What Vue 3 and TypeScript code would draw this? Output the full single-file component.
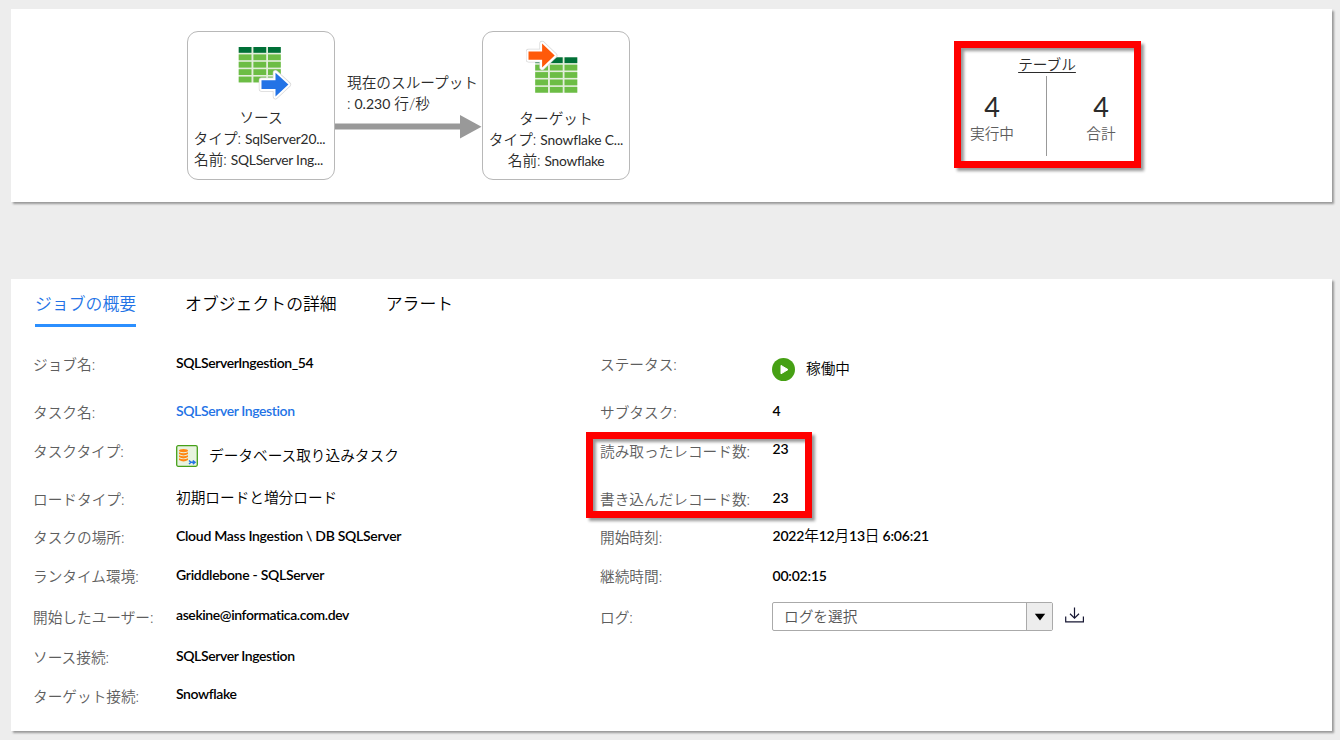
<script setup lang="ts">
interface Field {
  label: string
  value: string
  shift?: string
  kind?: string
  fit?: string
}

const tabs: string[] = ['ジョブの概要', 'オブジェクトの詳細', 'アラート']

const jobFields: Field[] = [
  { label: 'ジョブ名:', value: 'SQLServerIngestion_54', shift: 'up1', fit: 'tight' },
  { label: 'タスク名:', value: 'SQLServer Ingestion', shift: 'up1', kind: 'link', fit: 'tight' },
  { label: 'タスクタイプ:', value: 'データベース取り込みタスク', shift: 'down4', kind: 'task' },
  { label: 'ロードタイプ:', value: '初期ロードと増分ロード', shift: 'up2', kind: 'jp' },
  { label: 'タスクの場所:', value: 'Cloud Mass Ingestion \\ DB SQLServer', shift: 'up1', fit: 'snug' },
  { label: 'ランタイム環境:', value: 'Griddlebone - SQLServer', shift: 'up1', fit: 'snug' },
  { label: '開始したユーザー:', value: 'asekine@informatica.com.dev', shift: 'up2', fit: 'tight' },
  { label: 'ソース接続:', value: 'SQLServer Ingestion', shift: 'up1', fit: 'tight' },
  { label: 'ターゲット接続:', value: 'Snowflake', shift: 'up2', fit: 'tight' },
]

const runFields: Field[] = [
  { label: 'ステータス:', value: '稼働中', shift: 'down4', kind: 'status' },
  { label: 'サブタスク:', value: '4', shift: 'up1', fit: 'digits' },
  { label: '読み取ったレコード数:', value: '23', shift: 'up2', fit: 'digits' },
  { label: '書き込んだレコード数:', value: '23', shift: 'up1', fit: 'digits' },
  { label: '開始時刻:', value: '2022年12月13日 6:06:21', shift: 'up1', kind: 'date', fit: 'digits' },
  { label: '継続時間:', value: '00:02:15', fit: 'digits' },
  { label: 'ログ:', value: 'ログを選択', kind: 'select' },
]

const dateParts = (text: string): string[] => text.split(/([年月日])/)

const columns = [0, 14.7, 29.3]
const rows = [0, 7.4, 14.8, 22.2, 29.6]
</script>

<template>
  <main class="page">
    <section class="card flow">
      <div class="node source">
        <svg class="node-icon" width="60" height="60" viewBox="235 41 60 60">
          <g transform="translate(238.7 47)">
            <rect width="42" height="35.5" fill="#e3eedb" />
            <template v-for="y in rows" :key="y">
              <rect v-for="x in columns" :key="x" :x="x" :y="y" width="12.8" height="5.8" :fill="y ? '#6cbd45' : '#007037'" />
            </template>
          </g>
          <path d="M261.5 80.3h14v-7.6l12.9 11.9-12.9 12v-7.5h-14z" fill="#d8d8d8" stroke="#d8d8d8" stroke-width="5.4" stroke-linejoin="round" />
          <path d="M261.5 80.3h14v-7.6l12.9 11.9-12.9 12v-7.5h-14z" fill="#2373e6" stroke="#fff" stroke-width="4" stroke-linejoin="round" paint-order="stroke" />
        </svg>
        <div class="node-title">ソース</div>
        <div class="node-line">タイプ: <span class="src-type">SqlServer20...</span></div>
        <div class="node-line name">名前: <span class="src-name">SQLServer Ing...</span></div>
      </div>
      <div class="link-area">
        <div class="throughput">現在のスループット<br />: <span class="rate">0.230</span> 行/秒</div>
        <svg class="arrow" width="147" height="24" viewBox="0 0 147 24">
          <path d="M0 8.5h125V0l21.5 11.8L125 23.5v-9H0z" fill="#999" />
        </svg>
      </div>
      <div class="node target">
        <svg class="node-icon" width="60" height="60" viewBox="525.5 39.5 60 60">
          <g transform="translate(534.7 56.8)">
            <rect width="42" height="35.5" fill="#e3eedb" />
            <template v-for="y in rows" :key="y">
              <rect v-for="x in columns" :key="x" :x="x" :y="y" width="12.8" height="5.8" :fill="y ? '#6cbd45' : '#007037'" />
            </template>
          </g>
          <path d="M528 51h13.6v-8l12.6 12-12.6 12v-7.8H528z" fill="#d8d8d8" stroke="#d8d8d8" stroke-width="5.4" stroke-linejoin="round" />
          <path d="M528 51h13.6v-8l12.6 12-12.6 12v-7.8H528z" fill="#ff5a0a" stroke="#fff" stroke-width="4" stroke-linejoin="round" paint-order="stroke" />
        </svg>
        <div class="node-title">ターゲット</div>
        <div class="node-line">タイプ: <span class="dst-type">Snowflake C...</span></div>
        <div class="node-line name">名前: <span class="dst-name">Snowflake</span></div>
      </div>
      <div class="tables">
        <div class="tables-title">テーブル</div>
        <div class="counts">
          <div class="count"><b>4</b><span>実行中</span></div>
          <i class="rule"></i>
          <div class="count"><b>4</b><span>合計</span></div>
        </div>
        <div class="marker"></div>
      </div>
    </section>

    <section class="card details">
      <nav class="tabs">
        <a v-for="(tab, i) in tabs" :key="tab" class="tab" :class="{ active: i === 0 }">{{ tab }}</a>
      </nav>
      <div class="columns">
        <dl class="fields job">
          <template v-for="f in jobFields" :key="f.label">
            <dt>{{ f.label }}</dt>
            <dd :class="[f.shift, f.fit, f.kind]">
              <svg v-if="f.kind === 'task'" class="task-icon" width="22" height="22" viewBox="0 0 22 22">
                <rect x=".7" y=".7" width="20.6" height="20.6" rx="1.5" fill="#e8f3df" stroke="#46a01a" stroke-width="1.3" />
                <g fill="#ff8712">
                  <ellipse cx="7.5" cy="5.6" rx="4.5" ry="1.7" />
                  <path d="M3 7.3q4.5 1.8 9 0v1.8q-4.5 2.6-9 0zM3 10.3q4.5 1.8 9 0v1.8q-4.5 2.6-9 0zM3 13.3q4.5 1.8 9 0v1.8q-4.5 2.8-9 0z" />
                </g>
                <path d="M13 15.5l2 1.8-2 1.8M14 17.3h5M16.8 15.5l2.3 1.8-2.3 1.8" fill="none" stroke="#2373e6" stroke-width="1.4" />
              </svg>
              <span>{{ f.value }}</span>
            </dd>
          </template>
        </dl>
        <dl class="fields run">
          <template v-for="f in runFields" :key="f.label">
            <dt>{{ f.label }}</dt>
            <dd :class="[f.shift, f.fit, f.kind]">
              <template v-if="f.kind === 'select'">
                <div class="combo">
                  <span class="combo-text">{{ f.value }}</span>
                  <span class="combo-button">
                    <svg width="12" height="8" viewBox="0 0 12 8"><path d="M.8.8h10.4L6 7.4z" /></svg>
                  </span>
                </div>
                <svg class="download" width="20" height="17" viewBox="0 0 20 17" fill="none" stroke="#171733" stroke-width="1.2">
                  <path d="M9.5.5v10.2M5 6.7l4.5 4.4L14 6.7M.7 9.5v5.3h17.7V9.5" />
                </svg>
              </template>
              <span v-else-if="f.kind === 'date'" class="date-text"><span v-for="(part, i) in dateParts(f.value)" :key="i" :class="{ unit: i % 2 === 1 }">{{ part }}</span></span>
              <template v-else>
                <svg v-if="f.kind === 'status'" class="play" width="24" height="24" viewBox="0 0 24 24">
                  <circle cx="11.5" cy="11.5" r="11.5" fill="#46a014" />
                  <path d="M9 7.4v8.4l7-4.2z" fill="#fff" stroke="#fff" stroke-linejoin="round" />
                </svg>
                <span>{{ f.value }}</span>
              </template>
            </dd>
          </template>
        </dl>
      </div>
      <div class="marker records"></div>
    </section>
  </main>
</template>

<style>
body {
  margin: 0;
  background: #ededed;
}
</style>

<style scoped>
* {
  box-sizing: border-box;
}
.page {
  height: 740px;
  padding: 9px 8px 0 11px;
  background: #ededed;
  overflow: hidden;
  font-family: Lato, "Noto Sans CJK JP", sans-serif;
  font-size: 14.67px;
  font-weight: 350;
  color: #2b2b2b;
}
.card {
  position: relative;
  width: 1321px;
  background: #fff;
  box-shadow: 2px 2px 2px #999;
}
.flow {
  display: flex;
  align-items: flex-start;
  height: 193px;
  padding: 22px 0 0 176px;
}
.node {
  display: flex;
  flex-direction: column;
  align-items: center;
  width: 148px;
  height: 149px;
  padding-top: 9px;
  border: 1px solid #b8b8b8;
  border-radius: 11px;
  white-space: nowrap;
}
.node-icon {
  flex: none;
  margin-left: 7px;
}
.target .node-icon {
  margin-left: 0;
  margin-top: -1px;
}
.node-title {
  margin-top: 7px;
  line-height: 20px;
}
.target .node-title {
  margin-top: 9px;
}
.node-line {
  line-height: 22px;
}
.source .node-line {
  margin-right: 3px;
}
.source .node-line.name {
  margin-right: 5px;
}
.node-line.name {
  margin-top: -1px;
}
.node-line span {
  font-size: 13.8px;
  font-weight: 400;
  letter-spacing: -0.2px;
}
.node-line .src-name {
  letter-spacing: -0.25px;
}
.node-line .dst-type {
  letter-spacing: -0.15px;
}
.node-line .dst-name {
  letter-spacing: -0.3px;
}
.link-area {
  width: 147px;
  padding-top: 41px;
}
.throughput {
  padding-left: 12px;
  line-height: 21px;
  white-space: nowrap;
}
.rate {
  font-size: 14px;
  font-weight: 400;
}
.arrow {
  display: block;
  margin-top: 1px;
}
.tables {
  position: relative;
  width: 187px;
  height: 127px;
  margin: 10px 0 0 324px;
  padding-top: 14px;
}
.tables-title {
  width: 187px;
  text-align: center;
  line-height: 20px;
  text-decoration: underline;
  text-underline-offset: 2px;
  padding-right: 1px;
}
.counts {
  display: flex;
  margin: 1px 0 0;
}
.count {
  width: 76px;
  display: flex;
  flex-direction: column;
  align-items: center;
  padding-top: 17px;
}
.count b {
  font-size: 27px;
  line-height: 28px;
  font-weight: 400;
}
.count span {
  margin-top: 3px;
  line-height: 20px;
  color: #5e5e5e;
}
.rule {
  width: 1px;
  height: 80px;
  margin: 0 16px;
  background: #999;
}
.marker {
  position: absolute;
  inset: 0;
  border: 7px solid #f00;
  filter: drop-shadow(3px 3px 1.5px rgba(0, 0, 0, 0.4));
}
.details {
  height: 452px;
  margin-top: 77px;
}
.tabs {
  display: flex;
  gap: 49px;
  padding: 12px 0 0 24px;
  font-size: 16.85px;
  color: #000;
}
.tab {
  height: 36px;
  line-height: 25px;
}
.tab.active {
  color: #2373e6;
  border-bottom: 3px solid #2b8fff;
}
.columns {
  display: flex;
  padding: 27px 0 0 22px;
}
.fields {
  display: grid;
  grid-template-rows: 48px 39px 48px 38px 39px 41px 40px 39px 20px;
  align-items: start;
  margin: 0;
  line-height: 20px;
  white-space: nowrap;
}
.job {
  grid-template-columns: 143px 424px;
}
.run {
  grid-template-columns: 172px 330px;
}
dt {
  margin-top: 1px;
  color: #5e5e5e;
}
dd {
  display: flex;
  align-items: center;
  height: 20px;
  margin: 0;
  color: #000;
  font-size: 14px;
  font-weight: 600;
}
dd.tight {
  letter-spacing: -0.4px;
}
dd.snug {
  letter-spacing: -0.29px;
}
dd.digits {
  padding-left: 0.5px;
  letter-spacing: -0.2px;
}
dd.link {
  color: #2373e6;
}
dd.jp,
dd.task,
dd.status,
dd.select {
  font-size: 14.67px;
  font-weight: 350;
}
.up1 {
  margin-top: -1px;
}
.up2 {
  margin-top: -2px;
}
.down4 {
  margin-top: 4px;
}
dd.jp {
  margin-top: -1px;
}
.task > span,
.status > span {
  padding-top: 2px;
}
.date-text {
  white-space: pre;
}
.unit {
  font-weight: 350;
  font-size: 14.67px;
}
.task-icon {
  margin: 2px 11px 0 0;
}
.play {
  margin: 3px 10px 0 0;
}
.combo {
  display: flex;
  flex: none;
  width: 281px;
  height: 29px;
  margin-top: -2px;
  border: 1px solid #aaa;
  border-radius: 2px;
}
.combo-text {
  flex: 1;
  padding-left: 11px;
  line-height: 27px;
  color: #555;
}
.combo-button {
  display: flex;
  align-items: center;
  justify-content: center;
  width: 26px;
  padding-top: 2px;
  border-left: 1px solid #aaa;
  background: #ededed;
}
.download {
  flex: none;
  margin: -4px 0 0 12px;
}
.records {
  inset: auto;
  left: 575px;
  top: 153px;
  width: 226px;
  height: 86px;
}
</style>
